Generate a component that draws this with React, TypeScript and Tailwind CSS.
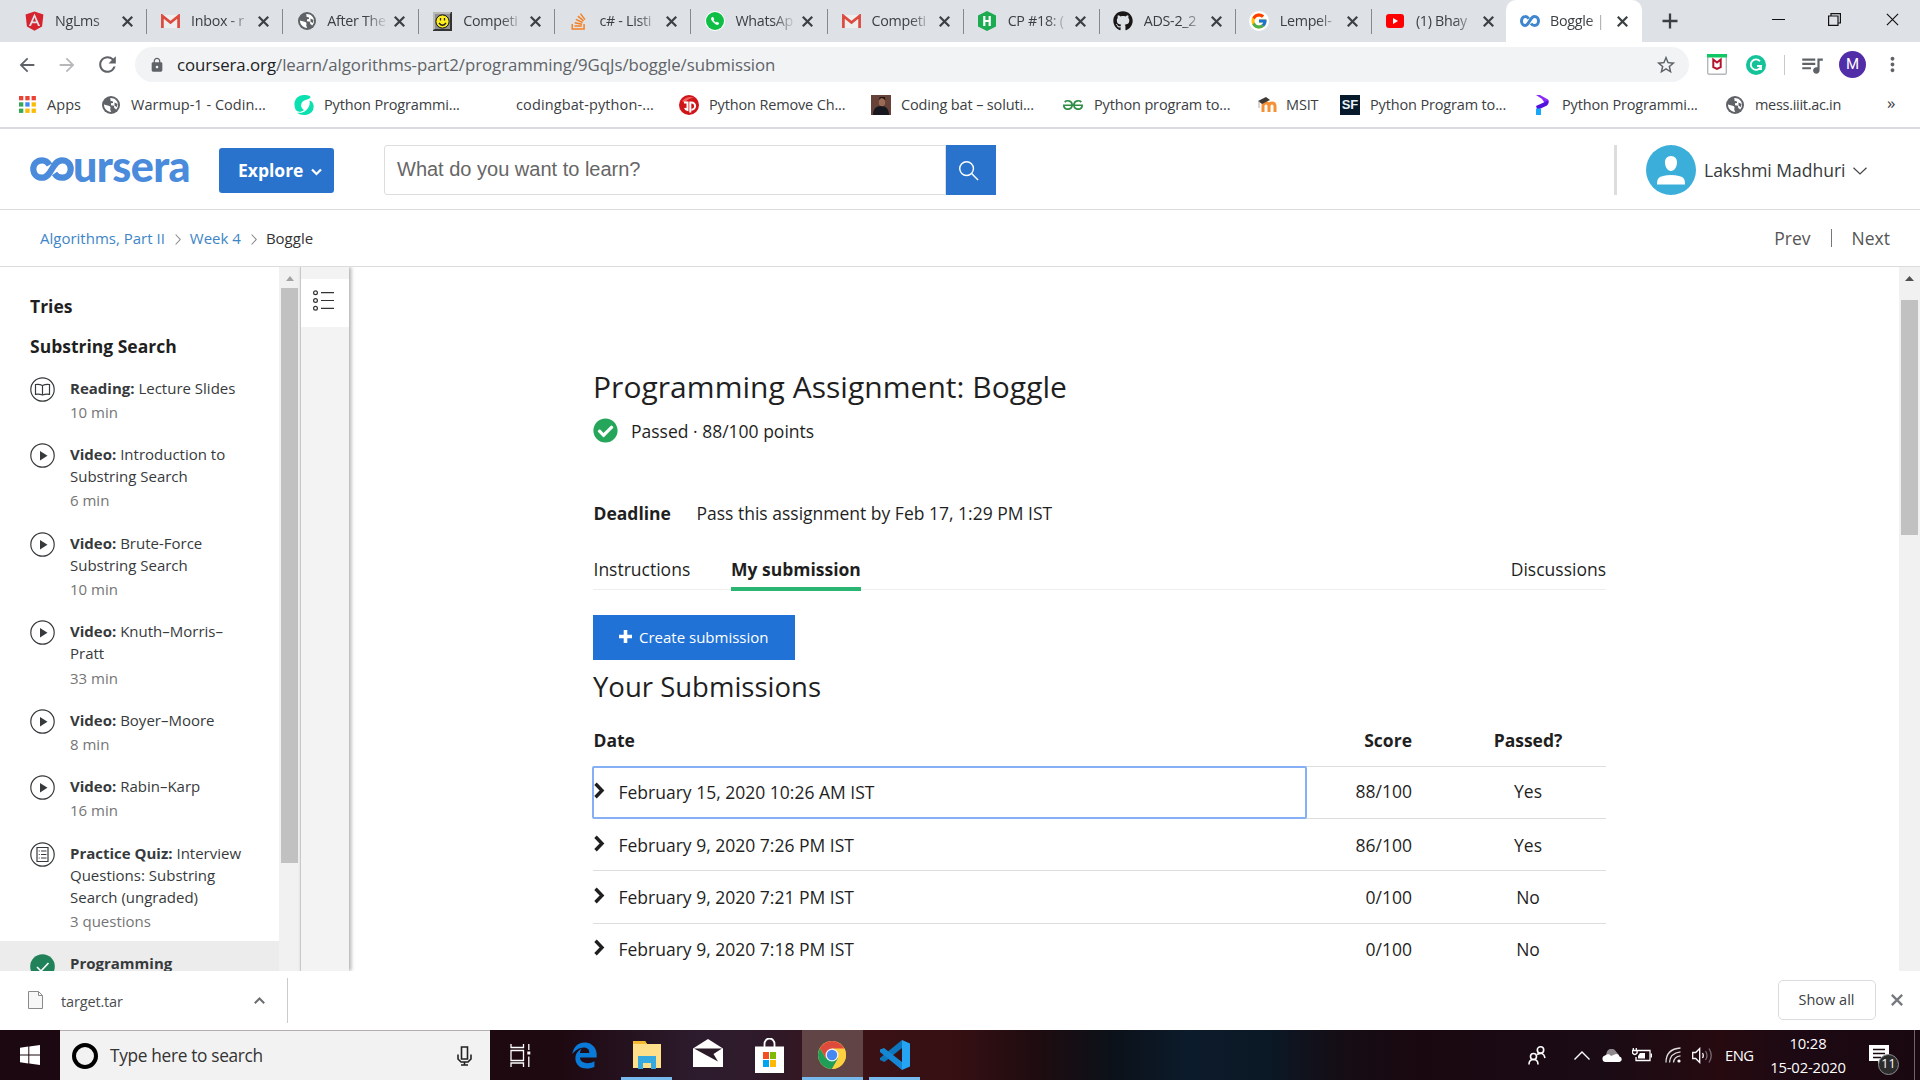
import React from "react";
import { FaAngular, FaEdgeLegacy, FaGithub, FaStackOverflow, FaCheckCircle } from "react-icons/fa";
import { FcGoogle } from "react-icons/fc";
import { MdQueueMusic, MdStarBorder, MdLock, MdArrowBack, MdArrowForward, MdRefresh, MdMoreVert } from "react-icons/md";
import { SiGeeksforgeeks } from "react-icons/si";

/* ---------- small drawings ---------- */

const Cross = ({ size = 11, w = 2, color = "#3c4043" }: { size?: number; w?: number; color?: string }) => (
  <svg width={size} height={size} viewBox="0 0 10 10" stroke={color} strokeWidth={w} className="shrink-0">
    <path d="M.7 .7L9.3 9.3M9.3 .7L.7 9.3" />
  </svg>
);

const Gmail = () => (
  <svg width="19" height="15" viewBox="0 0 19 15">
    <rect x="1" y="1" width="17" height="13" fill="#eee" />
    <path d="M1.4 14V2l8.1 6.6L17.600 2v12" fill="none" stroke="#dd4b3e" strokeWidth="2.700" />
  </svg>
);

const Smiley = () => (
  <svg width="19" height="19" viewBox="0 0 19 19">
    <rect width="19" height="19" fill="#333" />
    <path d="M0 0h18L17 2H2v15L0 18z" fill="#b9b9b9" />
    <rect x="2" y="2" width="15" height="15" fill="#8f8f8f" />
    <circle cx="9.500" cy="9.500" r="6.600" fill="#ffee1f" stroke="#111" />
    <path d="M7.500 6v2.500M11.500 6v2.500M6 11q3.500 4.500 7 0" stroke="#222" strokeWidth="1.300" fill="none" />
  </svg>
);

const Whats = () => (
  <div className="flex size-5 items-center justify-center rounded-full bg-white">
    <div className="flex size-[18px] items-center justify-center rounded-full bg-[#0fbf45]">
      <svg width="10" height="10" viewBox="0 0 10 10" fill="#fff">
        <path d="M1.500 1.500L3 .8 4.300 3.200 3.500 4.300 5.700 6.500 6.800 5.700 9.200 7 8.500 8.500Q6.500 10 3.500 6.500 0 3.500 1.500 1.500z" />
      </svg>
    </div>
  </div>
);

const Hacker = () => (
  <svg width="18" height="20" viewBox="0 0 18 20">
    <path d="M9 0l9 4.500v11L9 20 0 15.500v-11z" fill="#1cab50" />
    <path d="M6.300 5v10M11.700 5v10M6.300 10h5.400" stroke="#fff" strokeWidth="2.200" />
  </svg>
);

const Tube = () => (
  <svg width="18" height="14" viewBox="0 0 18 14">
    <rect width="18" height="14" rx="3" fill="#f00" />
    <path d="M7 4l5 3-5 3z" fill="#fff" />
  </svg>
);

const Infinity2 = () => (
  <svg width="20" height="12" viewBox="0 0 20 12" fill="none" stroke="#3f86cf" strokeWidth="3">
    <path d="M8.700 3.700C7.500 1.800 5.900 1.500 5 1.600 3 1.700 1.500 3.500 1.500 6S3 10.400 5 10.500C9.500 10.500 9.800 1.500 14.500 1.500c2.300 0 4 2 4 4.500s-1.700 4.500-4 4.500c-1.300 0-2.600-.6-3.500-2" />
  </svg>
);

const Globe = () => (
  <svg width="18" height="18" viewBox="0 0 18 18">
    <circle cx="9" cy="9" r="9" fill="#5f6368" />
    <path d="M2 8.500l4.500 1.200c1.500.3 2 1 2 2l-.3 1.800 1 2.400C5 15.600 1.800 12.500 2 8.500z" fill="#fff" />
    <path d="M8.300 2.100c3.800-.4 7.700 2.400 7.700 6.900 0 2-1 3.600-2 4.700-.2-1-.9-1.500-1.700-1.500l-.3-2.400-3-.6V7.300l2-.3V5.400L8.500 4.800z" fill="#fff" />
    <path d="M12.500 6.500l3 1.500-.6 3-2.400-1.200z" fill="#5f6368" />
  </svg>
);

const AppsGrid = () => (
  <svg width="17" height="17" viewBox="0 0 17 17">
    {["#ea4335", "#ea4335", "#ea4335", "#34a853", "#4285f4", "#fbbc05", "#34a853", "#fbbc05", "#fbbc05"].map((c, i) => (
      <rect key={i} x={(i % 3) * 6.300} y={Math.floor(i / 3) * 6.300} width="4.300" height="4.300" fill={c} />
    ))}
  </svg>
);

const Teal = () => (
  <svg width="20" height="20" viewBox="0 0 20 20">
    <path d="M1.500 14.500C-1.500 7 2 .3 10 0c4-.1 6.500.8 6.700 2.300C14.500 5 12 4.500 9.500 6c-3.500 2.200-3 7 .5 9-3 2.500-6.500 2.300-8.500-.5z" fill="#0be0b0" />
    <path d="M15.500 5.500c4 1 5 5.500 3.500 9.500-1.500 3.500-5 5-9 5-3.500 0-6-1-6.500-2.500 3 .8 5.500.2 8-1.800 3.500-2.700 4.800-6.200 4-10.200z" fill="#0be0b0" />
  </svg>
);

const RedP = () => (
  <svg width="20" height="20" viewBox="0 0 20 20">
    <circle cx="10" cy="10" r="10" fill="#cf1519" />
    <path d="M3 6q6-6 12-3-6 0-9 5z" fill="#f0605f" />
    <path d="M5 7.500h3.500V15q-2-.5-2.500-2M11.300 17.500V7.500h1.200a3.600 3.600 0 010 7.200" stroke="#fff" strokeWidth="2" fill="none" />
  </svg>
);

const Photo = () => (
  <svg width="20" height="20" viewBox="0 0 20 20">
    <rect width="20" height="20" fill="#664238" />
    <path d="M2 20c0-6 3-9 8-9s8 3 8 9z" fill="#17171f" />
    <ellipse cx="11" cy="7" rx="3.200" ry="4.300" fill="#9a6a55" />
    <path d="M7.600 5.500q3-5 6.800 0l-.6-3.500h-5z" fill="#1d1413" />
  </svg>
);

const Moodle = () => (
  <svg width="20" height="16" viewBox="0 0 20 16">
    <path d="M6 15V9q0-3 3-3t3 3v6M12 15V9q0-3 3-3t3 3v6" fill="none" stroke="#f59035" strokeWidth="3" />
    <path d="M1 4l8-4 4 3-8 4z" fill="#3e3836" />
    <path d="M2 4v7" stroke="#999" strokeWidth=".8" />
  </svg>
);

const Sf = () => (
  <div className="flex size-5 items-center justify-center bg-[#071a2b] font-['Liberation_Sans'] text-[13px] font-bold text-[#e8f3fb]">SF</div>
);

const PurpleP = () => (
  <svg width="13" height="20" viewBox="0 0 13 20">
    <path d="M0 0h4l8 4.500q1.500 1.500 0 3L9 8.500 6 4z" fill="#8b2bf7" />
    <path d="M0 11l12-5.500q1.500 3-1 5L1.500 15z" fill="#5312dc" />
    <path d="M0 13.500h5V20H0z" fill="#19a8f8" />
  </svg>
);

const McAfee = () => (
  <svg width="20" height="21" viewBox="0 0 20 21">
    <rect x=".7" y=".7" width="18.600" height="19.600" rx="1.500" fill="#fff" stroke="#b5b8ba" strokeWidth="1.400" />
    <rect width="20" height="3.500" fill="#11c765" />
    <path d="M6.300 5.500v7.700L10 15l3.700-1.800V5.500L10 8.500z" fill="none" stroke="#b5122b" strokeWidth="2" />
  </svg>
);

const Grammarly = () => (
  <svg width="20" height="20" viewBox="0 0 20 20">
    <circle cx="10" cy="10" r="10" fill="#15c39a" />
    <path d="M14 6.300A5.200 5.200 0 1015 11h-4M15 10.500V15" fill="none" stroke="#fff" strokeWidth="1.800" />
  </svg>
);

const Chrome = () => (
  <svg width="28" height="28" viewBox="0 0 28 28">
    <circle cx="14" cy="14" r="14" fill="#fcd03f" />
    <path d="M1.900 7A14 14 0 0014 28l6-10.500L14 14 8 17.500z" fill="#1e9e57" />
    <path d="M26.100 7H14v7l6.100 3.500L14 28A14 14 0 0026.100 7z" fill="#fcd03f" />
    <path d="M1.900 7L8 17.500 14 7.600h12.400L26.100 7A14 14 0 001.900 7z" fill="#de4b3c" />
    <circle cx="14" cy="14" r="6.500" fill="#f2f2f2" />
    <circle cx="14" cy="14" r="5.200" fill="#4588f3" />
  </svg>
);

const VsCode = () => (
  <svg width="30" height="30" viewBox="0 0 30 30">
    <path d="M22 0v8L4.500 22 0 20v-2z" fill="#0d76bd" />
    <path d="M0 9.500L4 8l18 14v8L0 12z" fill="#1687d4" />
    <path d="M22 0l8 3.500v23L22 30z" fill="#25a4f2" />
  </svg>
);

/* ---------- browser chrome ---------- */

const tabs: { icon: React.ReactNode; title: string }[] = [
  { icon: <FaAngular size={22} color="#d6232e" />, title: "NgLms" },
  { icon: <Gmail />, title: "Inbox - r" },
  { icon: <Globe />, title: "After The" },
  { icon: <Smiley />, title: "Competi" },
  { icon: <FaStackOverflow size={19} color="#f48024" />, title: "c# - Listi" },
  { icon: <Whats />, title: "WhatsAp" },
  { icon: <Gmail />, title: "Competi" },
  { icon: <Hacker />, title: "CP #18: (" },
  { icon: <FaGithub size={20} color="#191717" />, title: "ADS-2_2" },
  { icon: <div className="rounded-full bg-white p-px"><FcGoogle size={18} /></div>, title: "Lempel-" },
  { icon: <Tube />, title: "(1) Bhay" },
  { icon: <Infinity2 />, title: "Boggle |" },
];

function TabStrip() {
  return (
    <div className="flex h-[42px] shrink-0 bg-[#dee1e6] pl-[11px]">
      {tabs.map((t, i) => {
        const active = i === tabs.length - 1;
        return (
          <div
            key={i}
            className={
              active
                ? "relative -ml-[2px] flex h-full w-[136px] shrink-0 items-center rounded-t-[10px] bg-white pl-[13px]"
                : "relative flex h-full w-[136.100px] shrink-0 items-center pl-[13px]"
            }
          >
            <div className="flex w-[21px] shrink-0 justify-center">{t.icon}</div>
            <div className="ml-[10px] w-[62px] shrink-0 whitespace-nowrap text-[14.300px] tracking-[-0.3px] text-[#3c4043] [mask-image:linear-gradient(90deg,#000_38px,rgba(0,0,0,0.15)_58px)]">
              {t.title}
            </div>
            <div className="ml-[5px]">
              <Cross />
            </div>
            {i < tabs.length - 2 && <div className="absolute right-0 top-[9px] h-[25px] w-px bg-[#85888c]" />}
          </div>
        );
      })}
      <div className="flex flex-1 items-center">
        <svg width="16" height="16" viewBox="0 0 16 16" stroke="#3c4043" strokeWidth="2.300" className="ml-[20px]">
          <path d="M8 .5v15M.5 8h15" />
        </svg>
        <svg width="13" height="13" viewBox="0 0 13 13" stroke="#111" className="mb-1 ml-[94px]">
          <path d="M0 6.500h13" />
        </svg>
        <svg width="13" height="13" viewBox="0 0 13 13" stroke="#111" strokeWidth="1.200" fill="none" className="mb-1 ml-[43px]">
          <path d="M.6 3h9.400v9.400H.6zM3 3V.6h9.400V10H10" />
        </svg>
        <div className="mb-1 ml-[45px]">
          <Cross size={13} w={0.9} color="#111" />
        </div>
      </div>
    </div>
  );
}

function AddressBar() {
  return (
    <div className="flex h-[44px] shrink-0 items-center bg-white pt-px">
      <MdArrowBack size={22} color="#5f6368" className="ml-[16px] shrink-0" />
      <MdArrowForward size={22} color="#b6b8ba" className="ml-[18px] shrink-0" />
      <MdRefresh size={25} color="#5f6368" className="ml-[17px] shrink-0" />
      <div className="ml-[15px] flex h-[35px] w-[1554px] shrink-0 items-center rounded-full bg-[#f1f3f4]">
        <MdLock size={16} color="#5f6368" className="ml-[14px]" />
        <div className="ml-[12px] flex-1 text-[16.800px] tracking-[-0.03px] text-[#5f6368]">
          <span className="text-[#202124]">coursera.org</span>/learn/algorithms-part2/programming/9GqJs/boggle/submission
        </div>
        <MdStarBorder size={22} color="#5f6368" className="mr-[12px]" />
      </div>
      <div className="ml-[18px] shrink-0"><McAfee /></div>
      <div className="ml-[19px] shrink-0"><Grammarly /></div>
      <div className="ml-[18px] h-[20px] w-px bg-[#c8cacd]" />
      <MdQueueMusic size={26} color="#5f6368" className="ml-[14px] shrink-0" />
      <div className="ml-[14px] flex size-[27px] shrink-0 items-center justify-center rounded-full bg-[#512da8] font-[Roboto] text-[15px] text-white">M</div>
      <MdMoreVert size={23} color="#5f6368" className="ml-[15px] shrink-0" />
    </div>
  );
}

function Mark({ box, gap, children, icon }: { box: string; gap: string; children: React.ReactNode; icon: React.ReactNode }) {
  return (
    <div className={"flex shrink-0 items-center whitespace-nowrap " + box}>
      <div className={"flex shrink-0 " + gap}>{icon}</div>
      <span>{children}</span>
    </div>
  );
}

function Bookmarks() {
  return (
    <div className="flex h-[41px] shrink-0 items-center bg-white pb-[4px] pl-[19px] text-[14.500px] tracking-[-0.15px] text-[#3c4043]">
      <Mark box="w-[82px] tracking-[0.05px]" gap="w-[28px]" icon={<AppsGrid />}>Apps</Mark>
      <Mark box="w-[193px] tracking-[0.02px]" gap="w-[30px] pl-px" icon={<Globe />}>Warmup-1 - Codin...</Mark>
      <Mark box="w-[192px]" gap="w-[30px]" icon={<Teal />}>Python Programmi...</Mark>
      <Mark box="w-[193px] tracking-[0.12px]" gap="w-[30px]" icon={null}>codingbat-python-...</Mark>
      <Mark box="w-[192px]" gap="w-[30px]" icon={<RedP />}>Python Remove Ch...</Mark>
      <Mark box="w-[192px]" gap="w-[30px]" icon={<Photo />}>Coding bat – soluti...</Mark>
      <Mark box="w-[194px]" gap="w-[31px]" icon={<SiGeeksforgeeks size={20} color="#2f8d46" />}>Python program to...</Mark>
      <Mark box="w-[83px]" gap="w-[29px]" icon={<Moodle />}>MSIT</Mark>
      <Mark box="w-[196px]" gap="w-[30px]" icon={<Sf />}>Python Program to...</Mark>
      <Mark box="w-[189px]" gap="w-[26px]" icon={<PurpleP />}>Python Programmi...</Mark>
      <Mark box="w-[162px] tracking-[-0.3px]" gap="w-[30px] pl-px" icon={<Globe />}>mess.iiit.ac.in</Mark>
      <span className="mb-[3px] text-[17px]">»</span>
    </div>
  );
}

/* ---------- course page ---------- */

function Logo() {
  return (
    <div className="flex h-[50px] w-[160px] items-center text-[#4a8bdc]">
      <svg width="44" height="24" viewBox="0 0 44 24" fill="none" stroke="currentColor" strokeWidth="6.200" className="-mt-[2px] shrink-0">
        <path d="M19.500 8C17.500 4.500 15 3.300 12 3.300 7 3.300 3.300 7 3.300 12s3.700 8.700 8.700 8.700C22 20.700 22 3.300 32 3.300c5 0 8.700 3.700 8.700 8.700s-3.700 8.700-8.700 8.700c-3 0-5.500-1.200-7.500-4.200" />
      </svg>
      <span className="-ml-px -mt-[9px] font-[Lato] text-[43px] font-black leading-[43px] tracking-[-0.6px]">ursera</span>
    </div>
  );
}

function Header() {
  return (
    <div className="flex h-[81px] shrink-0 items-center border-b border-[#dcdcdc] bg-white pl-[30px] pt-[2px]">
      <Logo />
      <div className="ml-[29px] flex h-[45px] w-[115px] items-center rounded-[3px] bg-[#2a73cc] pl-[19px] text-[17.500px] font-bold text-white">
        <span className="w-[66px]">Explore</span>
        <svg width="11" height="8" viewBox="0 0 11 8" fill="none" stroke="#fff" strokeWidth="2.200" className="ml-[7px] mt-1">
          <path d="M1 1.500l4.500 4.500L10 1.500" />
        </svg>
      </div>
      <div className="ml-[50px] flex h-[50px] w-[562px] items-center rounded-l-[3px] border border-[#ddd] pb-[2px] pl-[12px] font-['Liberation_Sans'] text-[20px] text-[#666]">
        What do you want to learn?
      </div>
      <div className="flex h-[50px] w-[50px] items-center justify-center bg-[#2a73cc] pr-[5px]">
        <svg width="21" height="21" viewBox="0 0 22 22" fill="none" stroke="#fff" strokeWidth="1.500">
          <circle cx="9" cy="9" r="7.200" />
          <path d="M14 14l7 7" />
        </svg>
      </div>
      <div className="ml-[618px] h-[50px] w-[3px] bg-[#ddd]" />
      <svg width="50" height="50" viewBox="0 0 50 50" className="ml-[29px]">
        <circle cx="25" cy="25" r="25" fill="#3bafda" />
        <path d="M25 11c4 0 6.300 3 6 7-.3 4-2.500 8-6 8s-5.700-4-6-8c-.3-4 2-7 6-7zM11 39.500c0-6.500 2-7.500 6-8.500 5-1.500 11-1.500 16 0 4 1 6 2 6 8.500z" fill="#fff" />
      </svg>
      <span className="ml-[8px] w-[149px] whitespace-nowrap text-[17.500px] text-[#373a3c]">Lakshmi Madhuri</span>
      <svg width="14" height="8" viewBox="0 0 14 8" fill="none" stroke="#444" strokeWidth="1.200" className="mt-[2px]">
        <path d="M.5 .8L7 7l6.500-6.200" />
      </svg>
    </div>
  );
}

const Sep = () => (
  <svg width="6" height="11" viewBox="0 0 6 11" fill="none" stroke="#888" strokeWidth="1.100" className="ml-[10px] mr-[9px] mt-[3px]">
    <path d="M.6 .5L5.200 5.500 .6 10.500" />
  </svg>
);

function Crumbs() {
  return (
    <div className="flex h-[57px] shrink-0 items-center border-b border-[#dcdcdc] bg-white pl-[40px] text-[15px] text-[#3d85c6]">
      <span>Algorithms, Part II</span>
      <Sep />
      <span>Week 4</span>
      <Sep />
      <span className="text-[#333]">Boggle</span>
      <div className="ml-auto mr-[30px] flex items-center text-[17.500px] text-[#555]">
        <span>Prev</span>
        <div className="ml-[20px] mr-[20px] h-[18px] w-px bg-[#777]" />
        <span>Next</span>
      </div>
    </div>
  );
}

const Ring = ({ kind }: { kind: string }) => (
  <svg width="25" height="25" viewBox="0 0 25 25" fill="none" stroke="#373a3c" strokeWidth="1.200" className="shrink-0">
    <circle cx="12.500" cy="12.500" r="11.700" />
    {kind === "play" && <path d="M10 8v9.500l7.500-4.750z" fill="#373a3c" stroke="none" />}
    {kind === "book" && <path d="M12.500 8.500v9.500M12.500 8.500q-3-1.500-7-1v9.800q4-.5 7 .7 3-1.200 7-.7V7.500q-4-.5-7 1z" />}
    {kind === "quiz" && <path d="M7 5.500h11v14H7zM11 9h5.500M11 12.500h5.500M11 16h5.500M8.700 9h1M8.700 12.500h1M8.700 16h1" />}
  </svg>
);

const lessons = [
  { kind: "book", label: "Reading:", lines: ["Lecture Slides"], meta: "10 min" },
  { kind: "play", label: "Video:", lines: ["Introduction to", "Substring Search"], meta: "6 min" },
  { kind: "play", label: "Video:", lines: ["Brute-Force", "Substring Search"], meta: "10 min" },
  { kind: "play", label: "Video:", lines: ["Knuth–Morris–", "Pratt"], meta: "33 min" },
  { kind: "play", label: "Video:", lines: ["Boyer–Moore"], meta: "8 min" },
  { kind: "play", label: "Video:", lines: ["Rabin–Karp"], meta: "16 min" },
  { kind: "quiz", label: "Practice Quiz:", lines: ["Interview", "Questions: Substring", "Search (ungraded)"], meta: "3 questions" },
];

function Sidebar() {
  return (
    <div className="h-full w-[279px] shrink-0 overflow-hidden bg-white">
      <div className="pl-[30px] pt-[27px] text-[17.500px] font-bold leading-[24px] text-[#1f1f1f]">Tries</div>
      <div className="pl-[30px] pt-[16px] text-[17.500px] font-bold leading-[24px] text-[#1f1f1f]">Substring Search</div>
      <div className="pt-[18.500px]">
        {lessons.map((l, i) => (
          <div key={i} className={i === lessons.length - 1 ? "flex pb-[9px] pl-[30px]" : "flex pb-[20px] pl-[30px]"}>
            <Ring kind={l.kind} />
            <div className="ml-[15px] whitespace-nowrap text-[15px] leading-[22.200px] text-[#373a3c]">
              {l.lines.map((t, k) => (
                <div key={k}>
                  {k === 0 && <span className="font-bold">{l.label} </span>}
                  {t}
                </div>
              ))}
              <div className="pt-[2px] text-[#757575]">{l.meta}</div>
            </div>
          </div>
        ))}
      </div>
      <div className="flex h-[60px] bg-[#ececec] pl-[30px] pt-[11px]">
        <svg width="25" height="25" viewBox="0 0 25 25" className="mt-[2px]">
          <circle cx="12.500" cy="12.500" r="12.300" fill="#21825a" />
          <path d="M7 13l4 4 7.500-8" stroke="#fff" strokeWidth="1.600" fill="none" />
        </svg>
        <div className="ml-[15px] text-[15px] font-bold leading-[22px] text-[#373a3c]">Programming</div>
      </div>
    </div>
  );
}

const rows = [
  ["February 15, 2020 10:26 AM IST", "88/100", "Yes"],
  ["February 9, 2020 7:26 PM IST", "86/100", "Yes"],
  ["February 9, 2020 7:21 PM IST", "0/100", "No"],
  ["February 9, 2020 7:18 PM IST", "0/100", "No"],
];

function Submissions() {
  return (
    <div className="text-[17.500px]">
      <div className="flex h-[52px] items-center font-bold">
        <div className="w-[713px] pl-[0.500px]">Date</div>
        <div className="w-[106px] text-right">Score</div>
        <div className="ml-[38px] flex-1 text-center">Passed?</div>
      </div>
      {rows.map((r, i) => (
        <div key={i} className="flex h-[52.200px] items-center border-t border-[#ddd]">
          <div
            className={
              i === 0
                ? "-ml-px -mt-px flex h-[53px] w-[715px] shrink-0 items-center rounded-[2px] border-2 border-[#86b0f6]"
                : "flex w-[713px] shrink-0 items-center pl-px"
            }
          >
            <svg width="11" height="17" viewBox="0 0 11 17" fill="none" stroke="#1f1f1f" strokeWidth="3.400" className="mb-[3px] shrink-0">
              <path d="M1.500 1.800L8 8.500 1.500 15.200" />
            </svg>
            <span className="ml-[13.500px]">{r[0]}</span>
          </div>
          <div className={i === 0 ? "-mt-[2px] w-[105px] text-right" : "w-[106px] text-right"}>{r[1]}</div>
          <div className={i === 0 ? "-mt-[2px] ml-[38px] flex-1 text-center" : "ml-[38px] flex-1 text-center"}>{r[2]}</div>
        </div>
      ))}
    </div>
  );
}

function Main() {
  return (
    <div className="h-full flex-1 overflow-hidden bg-white">
      <div className="ml-[244px] w-[1013px] pt-[100px] text-[17.500px] text-[#1f1f1f]">
        <h1 className="text-[30px] leading-[40px] tracking-[0.04px]">Programming Assignment: Boggle</h1>
        <div className="mt-[11px] flex h-[26px] items-center">
          <FaCheckCircle size={25} color="#26a65b" className="mb-px" />
          <span className="ml-[13px]">Passed · 88/100 points</span>
        </div>
        <div className="mt-[57px] flex h-[24px] items-center">
          <span className="w-[103.500px] pl-[0.500px] font-bold">Deadline</span>
          <span>Pass this assignment by Feb 17, 1:29 PM IST</span>
        </div>
        <div className="mt-[32px] flex h-[33px] border-b border-[#eee] leading-[24px]">
          <span className="w-[138px] pl-[0.500px]">Instructions</span>
          <span className="h-[34px] border-b-4 border-[#2ab573] font-bold">My submission</span>
          <span className="ml-auto">Discussions</span>
        </div>
        <div className="mt-[25px] flex h-[45px] w-[202px] items-center bg-[#2172d7] text-[15px] text-white">
          <svg width="13" height="13" viewBox="0 0 13 13" stroke="#fff" strokeWidth="3.600" className="mb-[2px] ml-[26px]">
            <path d="M6.500 0v13M0 6.500h13" />
          </svg>
          <span className="ml-[7px]">Create submission</span>
        </div>
        <h2 className="mt-[8px] text-[27.500px] leading-[38px]">Your Submissions</h2>
        <div className="mt-[8px]">
          <Submissions />
        </div>
      </div>
    </div>
  );
}

function Content() {
  return (
    <div className="flex h-[704px] shrink-0 overflow-hidden">
      <Sidebar />
      <div className="flex h-full w-[21px] shrink-0 flex-col items-center bg-[#f1f1f1]">
        <svg width="8" height="5" viewBox="0 0 8 5" className="mt-[9px] shrink-0">
          <path d="M4 0l4 5H0z" fill="#a3a3a3" />
        </svg>
        <div className="mt-[7px] h-[575px] w-[17px] shrink-0 bg-[#c1c1c1]" />
      </div>
      <div className="z-10 h-full w-[49px] shrink-0 border-l border-[#c8c8c8] bg-[#f3f3f3] pt-[12px] shadow-[2px_0_4px_0px_rgba(0,0,0,0.32)]">
        <div className="flex h-[48px] items-center justify-center bg-white pr-[3px]">
          <svg width="21" height="21" viewBox="0 0 21 21" fill="none" stroke="#333" strokeWidth="1.200" className="mb-[5px]">
            <circle cx="2.500" cy="2.700" r="1.900" />
            <circle cx="2.500" cy="10.500" r="1.900" />
            <circle cx="2.500" cy="18.300" r="1.900" />
            <path d="M8 2.700h13M8 10.500h13M8 18.300h13" />
          </svg>
        </div>
      </div>
      <Main />
      <div className="flex h-full w-[21px] shrink-0 flex-col items-center bg-[#f1f1f1]">
        <svg width="9" height="5" viewBox="0 0 9 5" className="mt-[9px] shrink-0">
          <path d="M4.500 0L9 5H0z" fill="#505050" />
        </svg>
        <div className="mt-[19px] h-[235px] w-[17px] bg-[#c1c1c1]" />
      </div>
    </div>
  );
}

/* ---------- downloads and taskbar ---------- */

function Downloads() {
  return (
    <div className="flex h-[59px] shrink-0 items-center bg-white text-[14.500px] text-[#4a4d51]">
      <svg width="15" height="18" viewBox="0 0 15 18" fill="#f7f7f7" stroke="#8a8a8a" className="mb-px ml-[28px]">
        <path d="M.5 .5h10l4 4v13H.5zM10.500 .5v4h4" />
      </svg>
      <span className="ml-[18px] mt-[2px] w-[193px] tracking-[-0.15px]">target.tar</span>
      <svg width="11" height="7" viewBox="0 0 11 7" fill="none" stroke="#6b6e71" strokeWidth="2">
        <path d="M.8 6.200L5.500 1.500l4.700 4.700" />
      </svg>
      <div className="ml-[22px] h-[45px] w-px bg-[#c9cbce]" />
      <div className="mb-[2px] ml-auto flex h-[40px] w-[98px] items-center justify-center rounded-[5px] border border-[#dadce0] pr-px text-[14.500px] font-medium text-[#3c4043]">Show all</div>
      <div className="mb-[2px] ml-[15px] mr-[17px]">
        <Cross size={12} w={1.9} color="#75787c" />
      </div>
    </div>
  );
}

function Taskbar() {
  return (
    <div className="flex h-[50px] shrink-0 items-center bg-[linear-gradient(90deg,#1b0810_0px,#1e0911_560px,#2d1c2e_700px,#2e1a2a_760px,#3a1215_870px,#350f12_960px,#1d0c10_1040px,#0c1119_1110px,#0c1b2b_1190px,#0b1825_1270px,#150d15_1340px,#1a0810_1420px,#1a0b14_1600px,#260a10_1720px,#1c0913_1800px,#1a0810_1920px)]">
      <div className="flex w-[60px] justify-center">
        <svg width="20" height="20" viewBox="0 0 20 20" fill="#fff">
          <path d="M0 2.700L8.300 1.500v8H0zM9.300 1.400L20 0v9.500H9.300zM0 10.500h8.300v8L0 17.300zM9.300 10.500H20V20L9.300 18.600z" />
        </svg>
      </div>
      <div className="flex h-full w-[430px] shrink-0 items-center border-t border-[#b5adb0] bg-[#f2f2f2] text-[17.300px] tracking-[-0.33px] text-[#333]">
        <div className="ml-[12px] size-[26px] rounded-full border-[4px] border-black" />
        <span className="ml-[12px] w-[347px]">Type here to search</span>
        <svg width="15" height="20" viewBox="0 0 15 20" fill="none" stroke="#222" strokeWidth="1.600">
          <path d="M4.500 1h6v12h-6zM1 8.500v4.500l3 3h7l3-3V8.500M7.500 16v3M4 19h7" />
        </svg>
      </div>
      <svg width="21" height="23" viewBox="0 0 21 23" fill="none" stroke="#fff" strokeWidth="1.300" className="ml-[20px] shrink-0">
        <path d="M1 0v3.500h12.500V0M1 6.500h12.500v10H1zM1 23v-4h12.500v4M18.800 0v6M18.800 12.500V23" />
        <path d="M17.300 7.500h3v3h-3z" fill="#fff" stroke="none" />
      </svg>
      <div className="flex h-full w-[90px] shrink-0 items-center justify-center pl-[16px]">
        <FaEdgeLegacy size={27} color="#0a7ad8" />
      </div>
      <div className="flex h-full w-[51px] shrink-0 items-center justify-center border-b-[3px] border-[#76b9ed] pt-[3px]">
        <svg width="28" height="28" viewBox="0 0 28 28">
          <path d="M0 0h12l2 3h14v24H0z" fill="#ffe08a" />
          <path d="M0 0h12l2 3H0z" fill="#f5ba2f" />
          <path d="M5 28V15h18v13h-5v-6h-8v6z" fill="#36a9e1" />
        </svg>
      </div>
      <svg width="30" height="28" viewBox="0 0 30 28" className="mb-[4px] ml-[21px] shrink-0">
        <path d="M0 9.500L15 0l15 9.500V28H0z" fill="#fff" />
        <path d="M1 9.500h28L20.500 15l4.500 7.500L12 15.500z" fill="#2b1b29" />
      </svg>
      <svg width="29" height="35" viewBox="0 0 29 35" className="ml-[32px] shrink-0">
        <path d="M9.500 9V6a5 5.500 0 0110 0v3" fill="none" stroke="#fff" strokeWidth="1.800" />
        <path d="M0 8.500h29V35H0z" fill="#fff" />
        <path d="M8 14h6v7H8z" fill="#f25022" />
        <path d="M15 14h6v7h-6z" fill="#7fba00" />
        <path d="M8 22h6v7H8z" fill="#00a4ef" />
        <path d="M15 22h6v7h-6z" fill="#ffb900" />
      </svg>
      <div className="ml-[18px] flex h-full w-[61px] shrink-0 items-center justify-center border-b-[3px] border-[#76b9ed] bg-[#604446] pr-px pt-[3px]">
        <Chrome />
      </div>
      <div className="ml-[6px] flex h-full w-[51px] shrink-0 items-center justify-center border-b-[3px] border-[#76b9ed] pt-[3px]">
        <VsCode />
      </div>
      <div className="ml-auto flex h-full items-center text-white">
        <svg width="18" height="19" viewBox="0 0 18 19" fill="none" stroke="#fff" strokeWidth="1.600">
          <circle cx="12.500" cy="4" r="3.200" />
          <circle cx="5.500" cy="10.500" r="3" />
          <path d="M1 18.500q0-5 4.500-5t4.500 5M9 8.500q6.500-3.500 8 3.500" />
        </svg>
        <svg width="16" height="9" viewBox="0 0 16 9" fill="none" stroke="#fff" strokeWidth="1.400" className="ml-[28px]">
          <path d="M.5 8.500L8 1l7.500 7.500" />
        </svg>
        <svg width="20" height="13" viewBox="0 0 20 13" className="ml-[12px]">
          <path d="M5 7a5 5 0 019-4.500L17 6l-6 4z" fill="#8f898d" />
          <path d="M3.500 13a3.300 3.300 0 01-.5-6.500C5 4.500 8 5 9 7l5-2c2 0 3 1 3.500 2.500a2.800 2.800 0 010 5.500z" fill="#fff" />
        </svg>
        <svg width="20" height="14" viewBox="0 0 20 14" fill="none" stroke="#fff" strokeWidth="1.300" className="ml-[10px]">
          <path d="M5.500 2.500H18v10H4V9M19.500 5.500v4M1.300 0v2.500M4.300 0v2.500M.5 2.500h4.600v2.500q-2.300 3-4.600 0z" />
          <path d="M8 5h5v5.500H6V8z" fill="#fff" stroke="none" />
        </svg>
        <svg width="16" height="16" viewBox="0 0 16 16" fill="none" stroke="#ddd" strokeWidth="1.300" className="ml-[13px]">
          <path d="M1 15.500Q1 2 15.500 1M4.500 15.500Q5 6 15.500 4.800M8.500 15.500Q9 9.500 15.500 8.800" />
          <circle cx="14" cy="14" r="1.600" fill="#fff" stroke="none" />
        </svg>
        <svg width="21" height="17" viewBox="0 0 21 17" fill="none" stroke="#fff" strokeWidth="1.300" className="ml-[11px]">
          <path d="M.7 5.500h3l4-4v14l-4-4h-3zM10.500 6q1.500 2.500 0 5" />
          <path d="M13.500 4q3 4.500 0 9M17 1.500q4.500 7 0 14" stroke="#776d73" />
        </svg>
        <span className="ml-[12px] w-[29px] text-[14.800px] tracking-[-0.5px]">ENG</span>
        <div className="ml-[16px] w-[76px] whitespace-nowrap text-center text-[14.800px] leading-[24px] tracking-[-0.15px]">
          <div>10:28</div>
          <div>15-02-2020</div>
        </div>
        <div className="relative ml-[23px] h-[20px] w-[20px]">
          <svg width="20" height="20" viewBox="0 0 20 20">
            <path d="M0 0h20v16H11l-2 4v-4H0z" fill="#fff" />
            <path d="M4 4.500h12M4 8.500h12M4 12.500h8" stroke="#1a0810" strokeWidth="1.300" />
          </svg>
          <div className="absolute left-[9px] top-[9px] flex size-[21px] items-center justify-center rounded-full border border-[#8d8d8d] bg-[#2c2c2c] text-[12.500px] text-white">11</div>
        </div>
        <div className="ml-[25px] mr-[5px] h-full w-px bg-[#6d6368]" />
      </div>
    </div>
  );
}

export default function App() {
  return (
    <div className="flex h-[1080px] w-[1920px] flex-col overflow-hidden bg-white font-['Open_Sans','Noto_Sans',sans-serif]">
      <TabStrip />
      <AddressBar />
      <Bookmarks />
      <div className="h-[2px] shrink-0 bg-[#dadce0]" />
      <Header />
      <Crumbs />
      <Content />
      <Downloads />
      <Taskbar />
    </div>
  );
}
